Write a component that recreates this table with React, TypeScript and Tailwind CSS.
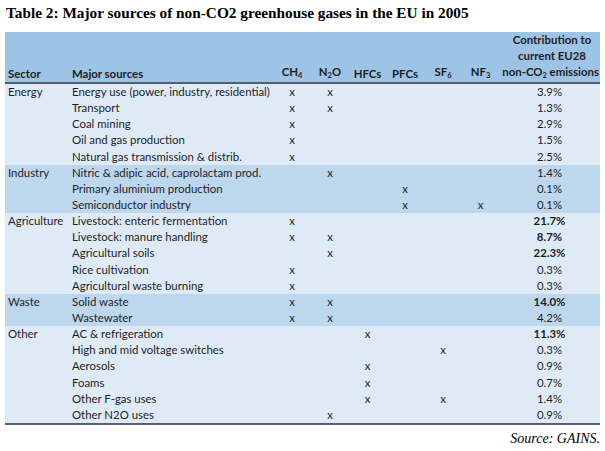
import React from "react";

type Row = {
  sector?: string;
  source: string;
  marks: number[]; // column index 0..5 (CH4, N2O, HFCs, PFCs, SF6, NF3)
  share: string;
  bold?: boolean;
  dark?: boolean;
};

const rows: Row[] = [
  { sector: "Energy", source: "Energy use (power, industry, residential)", marks: [0, 1], share: "3.9%" },
  { source: "Transport", marks: [0, 1], share: "1.3%" },
  { source: "Coal mining", marks: [0], share: "2.9%" },
  { source: "Oil and gas production", marks: [0], share: "1.5%" },
  { source: "Natural gas transmission & distrib.", marks: [0], share: "2.5%" },
  { sector: "Industry", source: "Nitric & adipic acid, caprolactam prod.", marks: [1], share: "1.4%", dark: true },
  { source: "Primary aluminium production", marks: [3], share: "0.1%", dark: true },
  { source: "Semiconductor industry", marks: [3, 5], share: "0.1%", dark: true },
  { sector: "Agriculture", source: "Livestock: enteric fermentation", marks: [0], share: "21.7%", bold: true },
  { source: "Livestock: manure handling", marks: [0, 1], share: "8.7%", bold: true },
  { source: "Agricultural soils", marks: [1], share: "22.3%", bold: true },
  { source: "Rice cultivation", marks: [0], share: "0.3%" },
  { source: "Agricultural waste burning", marks: [0], share: "0.3%" },
  { sector: "Waste", source: "Solid waste", marks: [0, 1], share: "14.0%", bold: true, dark: true },
  { source: "Wastewater", marks: [0, 1], share: "4.2%", dark: true },
  { sector: "Other", source: "AC & refrigeration", marks: [2], share: "11.3%", bold: true },
  { source: "High and mid voltage switches", marks: [4], share: "0.3%" },
  { source: "Aerosols", marks: [2], share: "0.9%" },
  { source: "Foams", marks: [2], share: "0.7%" },
  { source: "Other F-gas uses", marks: [2, 4], share: "1.4%" },
  { source: "Other N2O uses", marks: [1], share: "0.9%" },
];

const cols = "grid grid-cols-[64px_204px_38px_38px_37px_38px_38px_37px_101px]";

function Sub({ children }: { children: React.ReactNode }) {
  return <span className="text-[7.5px] relative top-[2px]">{children}</span>;
}

export default function App() {
  return (
    <div className="w-[605px] h-[451px] bg-white relative" style={{ fontFamily: "Lato, 'Open Sans', sans-serif" }}>
      <div className="pt-[4px] pl-[6px] text-[15.3px] font-bold text-black leading-[18px]" style={{ fontFamily: "'Liberation Serif', serif" }}>
        Table 2: Major sources of non-CO2 greenhouse gases in the EU in 2005
      </div>

      <div className="ml-[5px] mt-[10px] w-[595px] text-[11.4px] text-[#1e1e1e]">
        {/* Header */}
        <div className={`${cols} bg-[#9dc3e6] h-[52px] items-end font-bold border-b-2 border-[#555f6b] leading-[16px]`}>
          <div className="pl-[3px]">Sector</div>
          <div className="pl-[3px]">Major sources</div>
          <div className="text-center">CH<Sub>4</Sub></div>
          <div className="text-center">N<Sub>2</Sub>O</div>
          <div className="text-center">HFCs</div>
          <div className="text-center">PFCs</div>
          <div className="text-center">SF<Sub>6</Sub></div>
          <div className="text-center">NF<Sub>3</Sub></div>
          <div className="text-right pr-[1px]">
            <div className="text-center pl-[6px]">Contribution to</div>
            <div className="text-center pl-[6px]">current EU28</div>
            <div className="whitespace-nowrap">non-CO<Sub>2</Sub> emissions</div>
          </div>
        </div>

        {/* Body */}
        <div className="border-b-2 border-[#555f6b]">
          {rows.map((r, i) => (
            <div
              key={i}
              className={`${cols} h-[16.15px] items-center leading-[16px] ${r.dark ? "bg-[#bdd7ee]" : "bg-[#deebf7]"}`}
            >
              <div className="pl-[3px]">{r.sector ?? ""}</div>
              <div className="pl-[3px] whitespace-nowrap">{r.source}</div>
              {[0, 1, 2, 3, 4, 5].map((c) => (
                <div key={c} className="text-center">
                  {r.marks.includes(c) ? "x" : ""}
                </div>
              ))}
              <div className={`text-center ${r.bold ? "font-bold" : ""}`}>{r.share}</div>
            </div>
          ))}
        </div>
      </div>

      <div
        className="absolute right-[5px] top-[428px] text-[14px] italic text-black"
        style={{ fontFamily: "'Liberation Serif', serif" }}
      >
        Source: GAINS.
      </div>
    </div>
  );
}
